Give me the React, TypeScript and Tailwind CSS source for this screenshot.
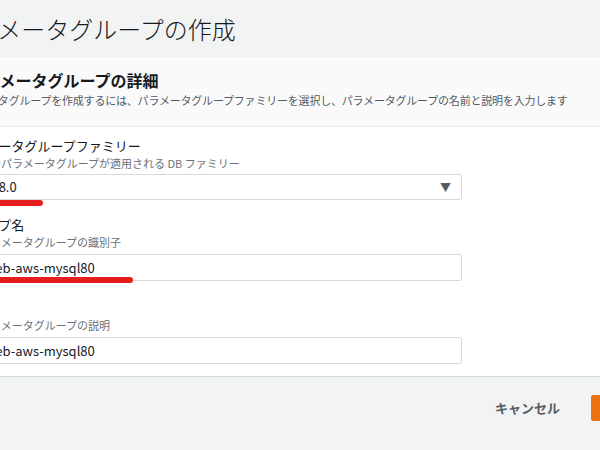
export default function App() {
  const jp = { fontFamily: '"Noto Sans CJK JP", "Noto Sans", sans-serif' };
  return (
    <div className="w-[600px] h-[450px] overflow-hidden bg-[#f2f3f3] text-[#16191f]" style={jp}>
      <div className="h-[57px] flex items-center">
        <h1 className="ml-[-50px] text-[24px] font-light text-[#16191f] whitespace-nowrap">パラメータグループの作成</h1>
      </div>
      <div className="bg-white ml-[-60px] w-[700px] border-b border-[#d5dbdb]">
        <div className="bg-[#fafafa] border-b border-[#eaeded] h-[70px] pl-[28px] pt-[12px]">
          <h2 className="text-[16px] font-bold leading-[22px] whitespace-nowrap">パラメータグループの詳細</h2>
          <p className="text-[11px] text-[#545b64] leading-[18px] whitespace-nowrap ml-[-13px] tracking-[-0.2px]">
            パラメータグループを作成するには、パラメータグループファミリーを選択し、パラメータグループの名前と説明を入力します
          </p>
        </div>
        <div className="pl-[20px] pt-[10px] pb-[12px]">
          <div className="text-[13px] leading-[18px] whitespace-nowrap">パラメータグループファミリー</div>
          <div className="text-[11px] text-[#687078] leading-[16px] whitespace-nowrap ml-[19px]">このパラメータグループが適用される DB ファミリー</div>
          <div className="relative mt-[3px] w-[502px] h-[26px] border border-[#d5dbdb] rounded-[2px] flex items-center px-[10px] text-[13px]">
            <span className="ml-[-9px]">mysql8.0</span>
            <span className="absolute right-[10px] text-[11px] text-[#545b64]">▼</span>
            <span className="absolute left-[30px] top-[25px] w-[52px] h-[6px] rounded-full bg-[#e41e1e]" />
          </div>
          <div className="mt-[16px] text-[13px] leading-[18px] whitespace-nowrap">グループ名</div>
          <div className="text-[11px] text-[#687078] leading-[16px] whitespace-nowrap ml-[19px]">パラメータグループの識別子</div>
          <div className="relative mt-[4px] w-[502px] h-[27px] border border-[#d5dbdb] rounded-[2px] flex items-center px-[10px] text-[13px]">
            <span className="ml-[14px]">web-aws-mysql80</span>
            <span className="absolute left-[30px] top-[22px] w-[142px] h-[6px] rounded-full bg-[#e41e1e]" />
          </div>
          <div className="mt-[18px] text-[13px] leading-[18px] whitespace-nowrap">説明</div>
          <div className="text-[11px] text-[#687078] leading-[16px] whitespace-nowrap ml-[19px]">パラメータグループの説明</div>
          <div className="mt-[4px] w-[502px] h-[27px] border border-[#d5dbdb] rounded-[2px] flex items-center px-[10px] text-[13px]">
            <span className="ml-[14px]">web-aws-mysql80</span>
          </div>
        </div>
      </div>
      <div className="flex items-center justify-end h-[62px] gap-[31px]">
        <span className="text-[13px] font-bold text-[#545b64]">キャンセル</span>
        <span className="w-[9px] h-[26px] bg-[#ec7211] rounded-l-[2px]" />
      </div>
    </div>
  );
}
